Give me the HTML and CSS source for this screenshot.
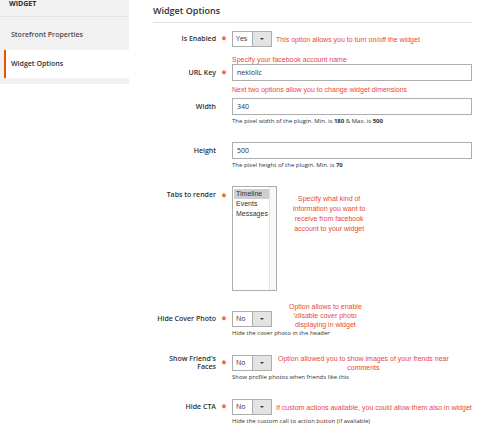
FILE: index.html
```html
<!DOCTYPE html>
<html>
<head>
<meta charset="utf-8">
<link rel="stylesheet" href="styles.css">
</head>
<body>
<div class="page">
  <aside class="side">
    <div class="side-title">WIDGET</div>
    <div class="side-item">Storefront Properties</div>
    <div class="side-item active">Widget Options</div>
  </aside>
  <main class="main">
    <h2 class="section-title">Widget Options</h2>

    <div class="field f-enabled">
      <span class="lbl">Is Enabled</span><span class="req">*</span>
      <div class="ctrl">
        <div class="select"><span class="val">Yes</span><span class="btn"><i class="arr"></i></span></div>
        <span class="ann ann-side">This option allows you to turn on/off the widget</span>
      </div>
    </div>

    <div class="ann ann-row a1">Specify your facebook account name</div>
    <div class="field">
      <span class="lbl">URL Key</span><span class="req">*</span>
      <div class="ctrl"><div class="input">neklollc</div></div>
    </div>

    <div class="ann ann-row a2">Next two options allow you to change widget dimensions</div>
    <div class="field f-width">
      <span class="lbl">Width</span>
      <div class="ctrl"><div class="input">340</div></div>
      <div class="note">The pixel width of the plugin. Min. is <b>180</b> &amp; Max. is <b>500</b></div>
    </div>

    <div class="field f-height">
      <span class="lbl">Height</span>
      <div class="ctrl"><div class="input">500</div></div>
      <div class="note">The pixel height of the plugin. Min. is <b>70</b></div>
    </div>

    <div class="field f-tabs">
      <span class="lbl top">Tabs to render</span><span class="req top">*</span>
      <div class="ctrl ctrl-top">
        <div class="listbox">
          <div class="opts">
            <div class="opt sel">Timeline</div>
            <div class="opt">Events</div>
            <div class="opt">Messages</div>
          </div>
          <div class="track"></div>
        </div>
        <div class="ann ann-tabs">Specify what kind of<br>information you want to<br>receive from facebook<br>account to your widget</div>
      </div>
    </div>

    <div class="field f-cover">
      <span class="lbl">Hide Cover Photo</span><span class="req">*</span>
      <div class="ctrl">
        <div class="select"><span class="val">No</span><span class="btn"><i class="arr"></i></span></div>
        <div class="ann ann-cover">Option allows to enable<br>\disable cover photo<br>displaying in widget</div>
      </div>
      <div class="note">Hide the cover photo in the header</div>
    </div>

    <div class="field f-friends">
      <span class="lbl two">Show Friend's Faces</span><span class="req">*</span>
      <div class="ctrl">
        <div class="select"><span class="val">No</span><span class="btn"><i class="arr"></i></span></div>
        <div class="ann ann-friends">Option allowed you to show images of your frends near<br>comments</div>
      </div>
      <div class="note">Show profile photos when friends like this</div>
    </div>

    <div class="field f-cta">
      <span class="lbl">Hide CTA</span><span class="req">*</span>
      <div class="ctrl">
        <div class="select"><span class="val">No</span><span class="btn"><i class="arr"></i></span></div>
        <span class="ann ann-side">If custom actions available, you could allow them also in widget</span>
      </div>
      <div class="note">Hide the custom call to action button (if available)</div>
    </div>
  </main>
</div>
</body>
</html>
```
FILE: styles.css
```css
html, body {
  margin: 0;
  padding: 0;
  background: #ffffff;
}
body {
  font-family: "Open Sans", "Liberation Sans", sans-serif;
  color: #303030;
  width: 480px;
  height: 424px;
  overflow: hidden;
}
.page {
  display: flex;
  align-items: flex-start;
}

/* Sidebar */
.side {
  width: 129px;
  flex: none;
  background: #f1f1f1;
  padding-bottom: 6px;
}
.side-title {
  font-weight: 700;
  font-size: 7px;
  line-height: 8px;
  padding: 0 0 8px 9px;
  border-bottom: 1px solid #e3e3e3;
  color: #303030;
}
.side-item {
  font-size: 7px;
  font-weight: 600;
  line-height: 10px;
  padding: 13px 0 10px 11px;
  color: #514943;
}
.side-item.active {
  background: #ffffff;
  margin-left: 4px;
  border-left: 2px solid #eb5202;
  padding: 9px 0 9px 5px;
  color: #303030;
}

/* Main */
.main {
  flex: 1;
  padding: 0 13px 0 24px;
}
.section-title {
  margin: 0;
  font-size: 9px;
  font-weight: 600;
  line-height: 12px;
  padding: 5px 0 5px 0;
  border-bottom: 1px solid #e3e3e3;
  color: #303030;
}

.field {
  display: grid;
  grid-template-columns: 63px 16px 1fr;
  align-items: start;
}
.lbl {
  grid-column: 1;
  grid-row: 1;
  align-self: center;
  text-align: right;
  font-size: 7px;
  font-weight: 600;
  line-height: 10px;
  color: #303030;
}
.lbl.two {
  line-height: 8px;
}
.lbl.top, .req.top {
  align-self: start;
  margin-top: 4px;
}
.req {
  grid-column: 2;
  grid-row: 1;
  align-self: center;
  text-align: center;
  color: #eb5202;
  font-size: 9px;
  font-weight: 700;
  line-height: 10px;
  padding-top: 2px;
}
.ctrl {
  grid-column: 3;
  grid-row: 1;
  display: flex;
  align-items: center;
}
.ctrl-top {
  align-items: flex-start;
}
.note {
  grid-column: 3;
  grid-row: 2;
  font-size: 6px;
  line-height: 9px;
  margin-top: 2px;
  color: #303030;
}
.note b {
  font-weight: 700;
}

/* spacing of rows */
.f-enabled { margin-top: 8px; }
.a1 { margin-top: 8px; }
.a2 { margin-top: 4px; }
.f-width { margin-top: 4px; }
.f-height { margin-top: 16px; }
.f-tabs { margin-top: 16px; }
.f-cover { margin-top: 20px; }
.f-friends { margin-top: 17px; }
.f-cta { margin-top: 17px; }

/* controls */
.input {
  box-sizing: border-box;
  width: 100%;
  height: 17px;
  border: 1px solid #adadad;
  padding-left: 4px;
  font-size: 7px;
  line-height: 15px;
  color: #303030;
}
.select {
  box-sizing: border-box;
  display: flex;
  width: 40px;
  height: 16px;
  border: 1px solid #adadad;
  flex: none;
}
.select .val {
  flex: 1;
  font-size: 7px;
  line-height: 14px;
  padding-left: 3px;
  color: #303030;
}
.select .btn {
  width: 18px;
  border-left: 1px solid #adadad;
  background: #e3e3e3;
  display: flex;
  align-items: center;
  justify-content: center;
}
.arr {
  width: 0;
  height: 0;
  border-left: 2px solid transparent;
  border-right: 2px solid transparent;
  border-top: 2.5px solid #41362f;
}

.listbox {
  box-sizing: border-box;
  width: 45px;
  height: 105px;
  border: 1px solid #adadad;
  display: flex;
  flex: none;
}
.opts {
  flex: 1;
  padding-top: 2px;
  padding-left: 1px;
}
.opt {
  font-family: "Liberation Sans", Arial, sans-serif;
  font-size: 7px;
  line-height: 10px;
  padding-left: 2px;
  color: #333333;
}
.opt.sel {
  background: #cecece;
}
.track {
  width: 6px;
  border-left: 1px solid #e3e3e3;
  background: #f8f8f8;
}

/* annotations */
.ann {
  font-family: "Liberation Sans", Arial, sans-serif;
  font-size: 7px;
  color: #e9473b;
  line-height: 9px;
  white-space: nowrap;
}
.ann-row {
  margin-left: 79px;
}
.ann-side {
  margin-left: 4px;
}
.ann-tabs {
  text-align: center;
  line-height: 10px;
  margin: 8px 0 0 16px;
}
.ann-cover {
  text-align: center;
  margin: -9px 0 -11px 17px;
  align-self: flex-start;
}
.ann-friends {
  text-align: center;
  margin: -3px 0 -3px 6px;
}
```
